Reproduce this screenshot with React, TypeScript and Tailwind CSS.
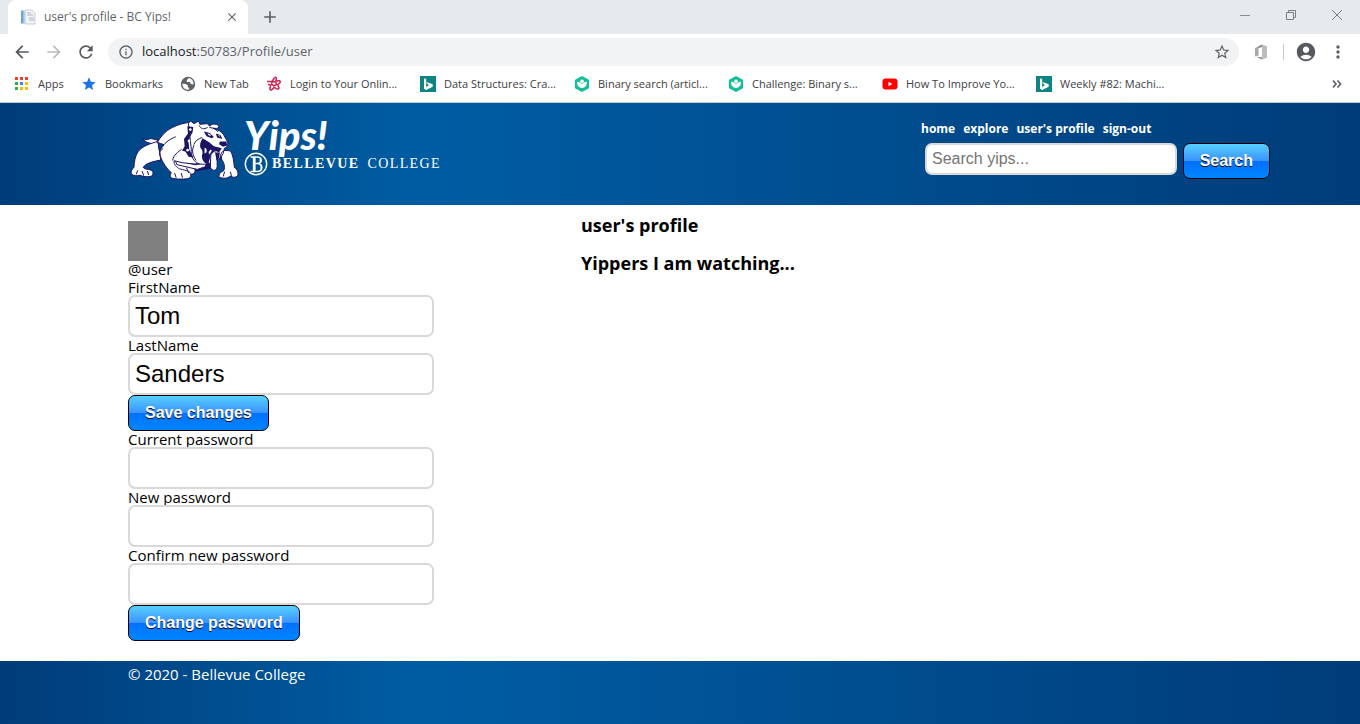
import type { ReactNode } from "react";
import {
  MdAccountCircle,
  MdAdd,
  MdArrowBack,
  MdArrowForward,
  MdClose,
  MdInfoOutline,
  MdMoreVert,
  MdRefresh,
  MdStar,
  MdStarBorder,
} from "react-icons/md";

function PageIcon() {
  return (
    <svg viewBox="0 0 16 16" className="h-4 w-4 shrink-0" aria-hidden="true">
      <path d="M5 1h7l3 3v11H5z" fill="#f1f3f6" stroke="#c9ced6" strokeWidth="1" />
      <path d="M1 1.500h3.500v13H1z" fill="#6aa7d6" />
      <path d="M3.500 1.500h1v13h-1z" fill="#c5dcef" />
      <path d="M7 4h4M7 6h6M9 9h5M9 11h5" stroke="#aeb6c0" strokeWidth="1" />
    </svg>
  );
}

function AppsIcon() {
  const colors = ["#ea4335", "#ea4335", "#ea4335", "#34a853", "#4285f4", "#fbbc04", "#34a853", "#fbbc04", "#fbbc04"];
  return (
    <svg viewBox="0 0 16 16" className="h-4 w-4 shrink-0" aria-hidden="true">
      {colors.map((c, i) => (
        <rect key={i} x={1 + (i % 3) * 5} y={1 + Math.floor(i / 3) * 5} width="3" height="3" fill={c} />
      ))}
    </svg>
  );
}

function GlobeIcon() {
  return (
    <svg viewBox="0 0 16 16" className="h-4 w-4 shrink-0" aria-hidden="true">
      <circle cx="8" cy="8" r="7.200" fill="#5f6368" />
      <path d="M8.300 2.200 6.600 4.400l.3 1.500 2.900.2 1.100 1.800 2.700.5c.2-2.800-1.400-5.200-4-6.100z" fill="#fff" />
      <path d="M2.300 7.800 5.600 8l2.300 1.600-.2 1.600 1.600.8-.6 1.800C5 14.200 2.300 11.400 2.300 7.800z" fill="#fff" />
    </svg>
  );
}

function BlackboardIcon() {
  return (
    <svg viewBox="0 0 16 16" className="h-4 w-4 shrink-0" fill="none" stroke="#cf2450" strokeWidth="1.5" strokeLinejoin="round" aria-hidden="true">
      <path d="M8.600 1.500c1.200-.6 2.200.5 1.800 1.600L9.800 5l3-.3c1.400-.1 2 1.300 1 2.200l-2.200 1.600 1.300 2.900c.5 1.300-.8 2.200-1.900 1.500L8.300 11.300 6 13.600c-1 .8-2.400 0-2.100-1.300l.9-3.100-2.700-.9" />
      <path d="M1 5.500h5.200L8.600 1.500M6.200 5.500l-.6 2.700 2.200 1.700 2.500-1.200-.3-2.600z" />
    </svg>
  );
}

function BingIcon() {
  return (
    <svg viewBox="0 0 16 16" className="h-4 w-4 shrink-0" aria-hidden="true">
      <path d="M0 0h16v16H0z" fill="#0c8484" />
      <path d="M4 2.200 6.200 3v7.900l3-1.800-1.500-.7-1-2.400 6 2.200v2.600L6.200 14 4 12.700z" fill="#fff" />
    </svg>
  );
}

function KhanIcon() {
  return (
    <svg viewBox="0 0 16 16" className="h-4 w-4 shrink-0" aria-hidden="true">
      <path d="M8 0l6.500 3.600a1.200 1.200 0 0 1 .6 1v6.800a1.200 1.200 0 0 1-.6 1L8 16l-6.500-3.600a1.200 1.200 0 0 1-.6-1V4.600a1.200 1.200 0 0 1 .6-1z" fill="#14bf96" />
      <circle cx="8" cy="5.300" r="1.800" fill="#fff" />
      <path d="M3 5.800c2.700 0 4.300 1 5 2.600.7-1.600 2.300-2.600 5-2.600C13 9.600 11 12 8 12S3 9.600 3 5.800z" fill="#fff" />
    </svg>
  );
}

function YoutubeIcon() {
  return (
    <svg viewBox="0 0 16 16" className="h-4 w-4 shrink-0" aria-hidden="true">
      <rect x="0.500" y="2.500" width="15" height="11" rx="3" fill="#f00" />
      <path d="M6.500 5.800v4.400L10.300 8z" fill="#fff" />
    </svg>
  );
}

function OfficeIcon() {
  return (
    <svg viewBox="0 0 16 18" className="h-[18px] w-4" aria-hidden="true">
      <path d="M9 1.500l5 1.800v11.400l-5 1.800z" fill="#bcbcbc" />
      <path d="M2 5l7-3.500V4L5.500 5.300v7.200L2 13.500z" fill="#a8a8a8" />
      <path d="M3.500 13.700 9 14.200v2.300z" fill="#858585" />
      <path d="M5 3.500l4-2v2.300l-3 1z" fill="#8c8c8c" />
    </svg>
  );
}

function Bulldog() {
  return (
    <svg viewBox="24 24 336 184" className="h-[61px] w-28 shrink-0" role="img" aria-label="Bulldog mascot">
      <path d="M150 150l70-8 60 20 4 10-60 10-50-4z" fill="#1b1464" />
      <g fill="#fff" stroke="#1b1464" strokeWidth="3" strokeLinejoin="round" strokeLinecap="round">
        <path d="M112 98C96 99 76 98 67 82c8 6 14 5 20 2 8-3 14 2 26 4z" />
        <path d="M112 92C90 98 66 106 54 122c-10 14-12 32-13 48-6 6-10 10-8 20 8 6 16 6 26 4 10 4 24 6 36 2 6-8 4-14-4-18-8-3-18-2-22-8 6-12 30-18 52-22z" />
        <path d="M158 146l10 4 30 14 26 10c4 8 0 14-6 16-14 4-26 0-34-6l-26-16z" />
        <path d="M166 148l60 14 34-6-4 12-24 8-60-14z" />
        <path d="M112 94c10-18 24-34 44-44 20-10 40-15 56-16l4 10 18-12 6 8c14-4 26 2 34 8l26 14 8 20-40 66-42 12-38-4-26-6c-2 10 8 20 16 24 12 4 30 6 34 14 2 8 0 14-8 16-18 2-38 2-50-2-6-6-4-12 0-16-18-16-34-42-36-62 2-8 8-16 14-22-8-4-14-4-20-8z" />
        <path d="M304 118l28 2c8 12 10 30 12 50 10 6 12 16 10 26-8 6-16 4-22 0-10 8-20 8-34 4-2-10 4-16 14-20 4-12 2-22-6-34z" />
        <path d="M206 36l6-6 10 8 14-8 4 10 22-2 8 8 6-6c10-2 20 0 22 8-4 6-12 4-18 4 14 4 26 10 32 20 4 10 12 18 12 26 0 8-4 12-10 14l-4 16c-6 14-18 22-30 26-16 6-34 10-50 2-12-10-18-22-16-40z" />
        <path d="M274 126c10-8 18-2 18 10l0 32c-2 14-14 14-20 2z" />
      </g>
      <g fill="none" stroke="#1b1464" strokeWidth="3" strokeLinecap="round">
        <path d="M166 78c-18 6-36 22-44 34M128 114c-8 4-10 10-8 18M184 116c-10 8-24 16-26 32M66 182l4 12M82 182l3 10M164 188l4 12M184 188l3 12M200 172l6 14M314 184l-3 12M332 184l3 10M52 180l-4 10" />
        <path d="M238 44c4 10 14 12 24 6M270 50c10 0 18 4 24 12M222 104c-8 14-4 32 6 44M246 80c-12 4-20 10-24 20M308 122c-6 8-8 14-6 24" />
      </g>
      <g fill="#1b1464">
        <path d="M202 46l18 2-2 16-8 14-4 18 2 20 12 24-14-2-10-16-10-2 8-14-2-22 12-16z" />
        <path d="M252 62l18 4 12 12-6 4-16-6z" />
        <path d="M288 68l14 4 6 12-16-4z" />
        <path d="M300 92l20 0 2 12-12 4-12-8z" />
        <path d="M248 82l20 12 14 12 24 6-8 12-14-4-12 14-6 26c-14-2-20-12-20-26 4-8 2-18-4-22-4-10 0-20 6-30z" />
        <path d="M286 126l14-2-2 18-8 8z" />
      </g>
      <g fill="#fff">
        <circle cx="211" cy="56" r="4" />
        <circle cx="207" cy="90" r="4" />
        <circle cx="203" cy="118" r="4" />
        <path d="M254 112c4-2 8 4 6 12l-6 4zM266 124l6-8 4 3-7 12zM263 67l8 3 3 5-8-2zM294 72l6 2 1 4z" />
      </g>
    </svg>
  );
}

function CollegeSeal() {
  return (
    <svg viewBox="0 0 24 24" className="h-6 w-6 shrink-0" fill="none" stroke="#fff" aria-hidden="true">
      <circle cx="12" cy="12" r="10.700" strokeWidth="1.400" />
      <path d="M10.200 5v14.500" strokeWidth="2.800" />
      <path d="M6.500 4.900h6.500c5.400 0 5.600 6 .8 6.600H11M13.300 11.500c6.300.3 6 8.100-.6 8.100H6.500" strokeWidth="1.500" />
      <path d="M16.300 6.500v3.300M17.200 13.500v4" strokeWidth="1.500" />
    </svg>
  );
}

type Bookmark = { label: string; icon: ReactNode; width: string };

const bookmarks: Bookmark[] = [
  { label: "Apps", icon: <AppsIcon />, width: "w-[49px]" },
  { label: "Bookmarks", icon: <MdStar className="h-4 w-4 shrink-0 text-[#1a73e8]" />, width: "w-[81px]" },
  { label: "New Tab", icon: <GlobeIcon />, width: "w-[68px]" },
  { label: "Login to Your Onlin...", icon: <BlackboardIcon />, width: "w-[136px]" },
  { label: "Data Structures: Cra...", icon: <BingIcon />, width: "w-[136px]" },
  { label: "Binary search (articl...", icon: <KhanIcon />, width: "w-[136px]" },
  { label: "Challenge: Binary s...", icon: <KhanIcon />, width: "w-[136px]" },
  { label: "How To Improve Yo...", icon: <YoutubeIcon />, width: "w-[136px]" },
  { label: "Weekly #82: Machi...", icon: <BingIcon />, width: "w-[136px]" },
];

function IconButton({ label, children }: { label: string; children: ReactNode }) {
  return (
    <button type="button" aria-label={label} className="flex h-7 w-5 shrink-0 items-center justify-center">
      {children}
    </button>
  );
}

function BrowserChrome() {
  return (
    <div className="border-b border-[#c8cacd] bg-white font-['Open_Sans','Noto_Sans',sans-serif]">
      <div className="flex h-[34px] items-center bg-[#e7eaed] pl-2">
        <div className="flex h-full w-60 items-center rounded-t-lg bg-white pr-2 pl-3">
          <PageIcon />
          <span className="ml-2 flex-1 text-[12px] whitespace-nowrap text-[#5f6368]">user&apos;s profile - BC Yips!</span>
          <button type="button" aria-label="Close tab" className="flex h-4 w-4 items-center justify-center">
            <MdClose className="h-3.5 w-3.5 text-[#5f6368]" />
          </button>
        </div>
        <button type="button" aria-label="New tab" className="ml-3 flex h-5 w-5 items-center justify-center">
          <MdAdd className="h-5 w-5 text-[#5f6368]" />
        </button>
        <div className="ml-auto flex gap-[30px] pr-[15px] pb-1">
          <button type="button" aria-label="Minimize">
            <svg viewBox="0 0 16 16" className="h-4 w-4" stroke="#8a8d91" fill="none"><path d="M3 8.500h10" /></svg>
          </button>
          <button type="button" aria-label="Restore">
            <svg viewBox="0 0 16 16" className="h-4 w-4" stroke="#7a7d81" fill="none"><path d="M3.500 5.500h7v7h-7zM5.500 5.500v-2h7v7h-2" /></svg>
          </button>
          <button type="button" aria-label="Close window">
            <svg viewBox="0 0 16 16" className="h-4 w-4" stroke="#7a7d81" fill="none"><path d="M3 3l10 10M13 3 3 13" /></svg>
          </button>
        </div>
      </div>

      <div className="flex h-9 items-center gap-3 px-3">
        <IconButton label="Back"><MdArrowBack className="h-5 w-5 text-[#55595e]" /></IconButton>
        <IconButton label="Forward"><MdArrowForward className="h-5 w-5 text-[#babcbe]" /></IconButton>
        <IconButton label="Reload"><MdRefresh className="h-5 w-5 text-[#55595e]" /></IconButton>
        <div className="flex h-7 flex-1 items-center rounded-full bg-[#f1f3f4] pr-2 pl-2.5">
          <MdInfoOutline className="h-4 w-4 shrink-0 text-[#5f6368]" />
          <a href="#profile" className="ml-2 flex-1 text-[13px] text-[#5f6368]">
            <span className="text-[#202124]">localhost</span>:50783/Profile/user
          </a>
          <button type="button" aria-label="Bookmark this page">
            <MdStarBorder className="h-[18px] w-[18px] text-[#5f6368]" />
          </button>
        </div>
        <IconButton label="Office"><OfficeIcon /></IconButton>
        <div className="h-4 w-px bg-[#c8cacd]" />
        <IconButton label="Account"><MdAccountCircle className="h-[22px] w-[22px] shrink-0 text-[#55595e]" /></IconButton>
        <IconButton label="Menu"><MdMoreVert className="h-5 w-5 text-[#5f6368]" /></IconButton>
      </div>

      <div className="flex h-8 items-center gap-[18px] overflow-hidden pb-1 pl-3.5">
        {bookmarks.map((b) => (
          <a key={b.label} href="#bookmark" className={`flex shrink-0 items-center gap-2 text-[11px] whitespace-nowrap text-[#3c4043] ${b.width}`}>
            {b.icon}
            {b.label}
          </a>
        ))}
        <button type="button" aria-label="More bookmarks" className="mr-[18px] ml-auto">
          <svg viewBox="0 0 10 10" className="h-2.5 w-2.5" fill="none" stroke="#5f6368" strokeWidth="1.700"><path d="M1 1.500 4 5 1 8.500M5.500 1.500l3 3.500-3 3.500" /></svg>
        </button>
      </div>
    </div>
  );
}

function GlossButton({ children }: { children: ReactNode }) {
  return (
    <button
      type="submit"
      className="h-9 rounded-[7px] border border-black bg-[linear-gradient(to_bottom,#58cfff_0%,#3a94ff_49%,#0071ff_50%,#0086ff_100%)] px-4 font-['Liberation_Sans',Arial,sans-serif] text-[16px] font-bold whitespace-nowrap text-white [text-shadow:0_1px_0_#000]"
    >
      {children}
    </button>
  );
}

function Field({ id, label, type = "text", value }: { id: string; label: string; type?: string; value?: string }) {
  return (
    <div className="flex flex-col">
      <label htmlFor={id} className="text-[15px] leading-4">{label}</label>
      <input
        id={id}
        type={type}
        defaultValue={value}
        className="h-[42px] w-[306px] rounded-[7px] border-2 border-[#d9d9d9] bg-white px-[5px] font-['Liberation_Sans',Arial,sans-serif] text-[24px]"
      />
    </div>
  );
}

const band =
  "bg-[linear-gradient(to_right,#003c79_0%,#005ca2_30%,#005ca2_33%,#003c79_100%)]";

function SiteHeader() {
  return (
    <header className={`flex h-[102px] items-start justify-between pr-[90px] pl-32 ${band}`}>
      <a href="#home" aria-label="Yips! Bellevue College" className="flex pt-4 text-white">
        <Bulldog />
        <div className="ml-1 flex flex-col">
          <span className="font-['Lato','Open_Sans',sans-serif] text-[40px] leading-[33px] font-black italic">Yips!</span>
          <span className="flex items-center gap-1 font-['Liberation_Serif',serif] text-[14px] leading-6 whitespace-nowrap">
            <CollegeSeal />
            <span className="font-bold tracking-widest">BELLEVUE</span>
            <span className="ml-1 tracking-widest">COLLEGE</span>
          </span>
        </div>
      </a>
      <div className="flex w-[349px] flex-col pt-[18px]">
        <nav className="flex gap-2 font-['Open_Sans','Noto_Sans',sans-serif] text-[12px] leading-4 font-bold whitespace-nowrap text-white">
          <a href="#home">home</a>
          <a href="#explore">explore</a>
          <a href="#profile">user&apos;s profile</a>
          <a href="#sign-out">sign-out</a>
        </nav>
        <form className="mt-1.5 flex items-start gap-1.5 pl-1" onSubmit={(e) => e.preventDefault()}>
          <input
            type="search"
            aria-label="Search yips"
            placeholder="Search yips..."
            className="h-8 min-w-0 flex-1 rounded-[7px] border-2 border-[#d9d9d9] bg-white px-[5px] font-['Liberation_Sans',Arial,sans-serif] text-[16px] text-black placeholder:text-[#757575]"
          />
          <GlossButton>Search</GlossButton>
        </form>
      </div>
    </header>
  );
}

export default function App() {
  return (
    <div className="flex min-h-screen flex-col bg-white font-['Open_Sans','Noto_Sans',sans-serif] text-black">
      <BrowserChrome />
      <SiteHeader />
      <main className="grid grid-cols-[453px_1fr] pb-5 pl-32">
        <section className="pt-4">
          <div className="h-10 w-10 bg-[#808080]" />
          <p className="pb-0.5 text-[15px] leading-4">@user</p>
          <form className="flex flex-col items-start" onSubmit={(e) => e.preventDefault()}>
            <Field id="first-name" label="FirstName" value="Tom" />
            <Field id="last-name" label="LastName" value="Sanders" />
            <GlossButton>Save changes</GlossButton>
          </form>
          <form className="flex flex-col items-start" onSubmit={(e) => e.preventDefault()}>
            <Field id="current-password" label="Current password" type="password" />
            <Field id="new-password" label="New password" type="password" />
            <Field id="confirm-password" label="Confirm new password" type="password" />
            <GlossButton>Change password</GlossButton>
          </form>
        </section>
        <section className="flex flex-col gap-4 pt-[9px]">
          <h1 className="text-[18px] leading-[22px] font-bold">user&apos;s profile</h1>
          <h2 className="text-[18px] leading-[22px] font-bold">Yippers I am watching...</h2>
        </section>
      </main>
      <footer className={`flex-1 pt-1 pb-10 pl-32 text-[15px] leading-[18px] text-white ${band}`}>
        © 2020 - Bellevue College
      </footer>
    </div>
  );
}
